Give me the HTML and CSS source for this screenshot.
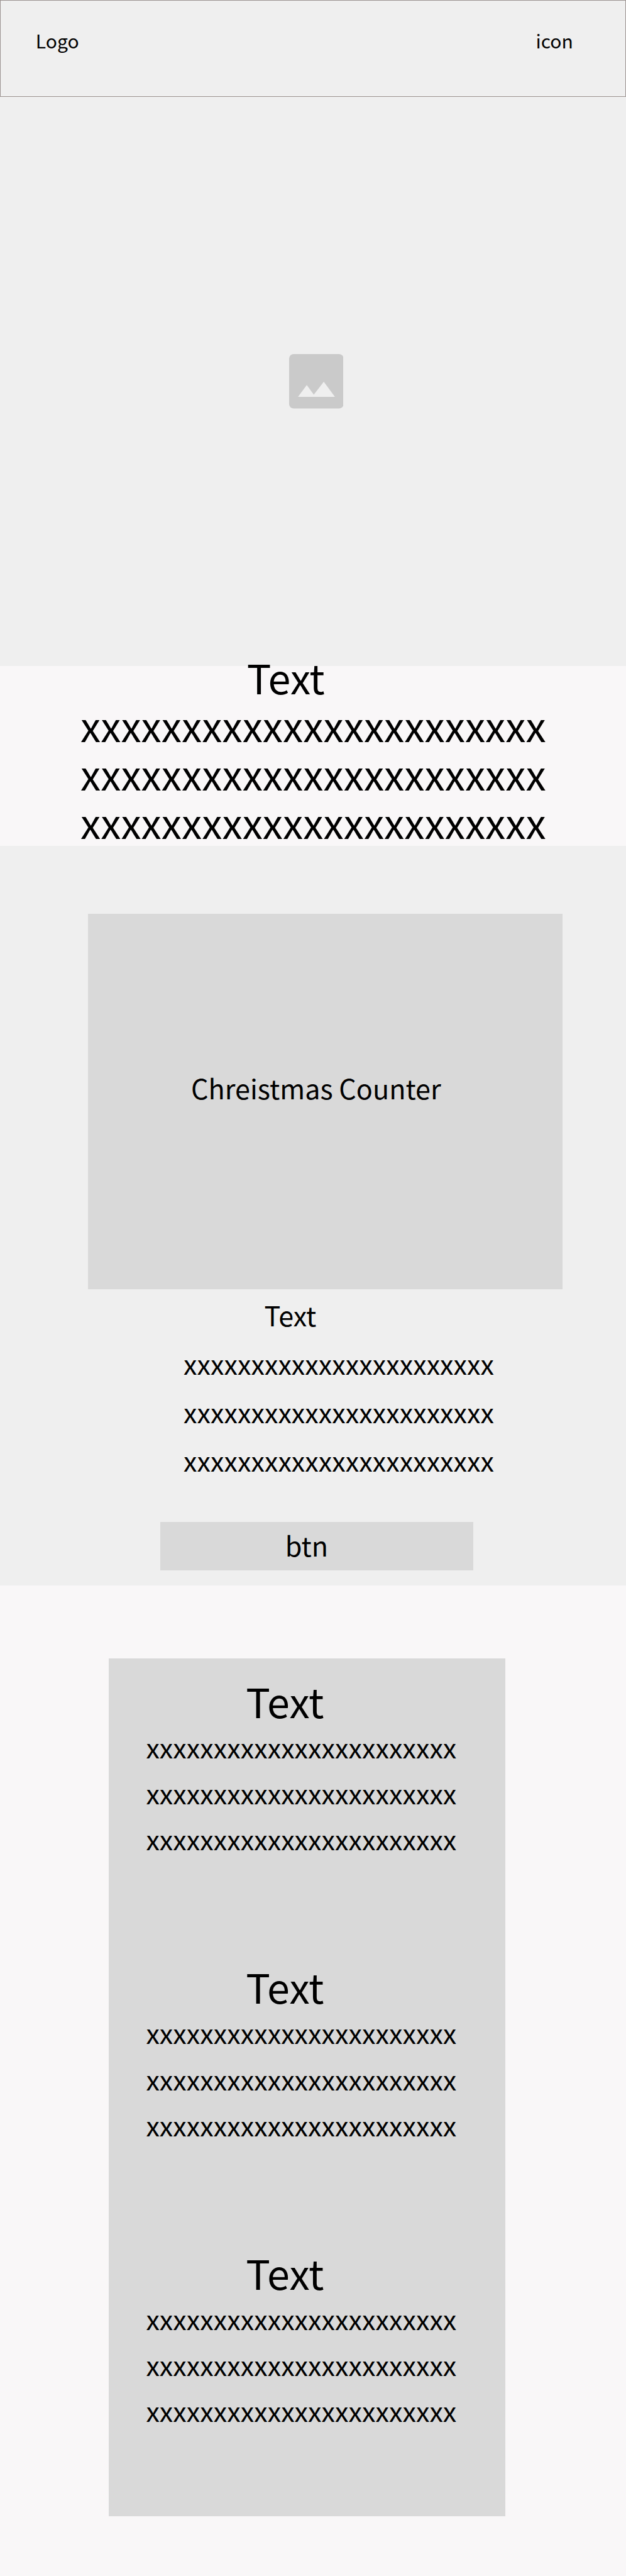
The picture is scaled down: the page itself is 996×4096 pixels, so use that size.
FILE: index.html
```html
<!DOCTYPE html>
<html lang="en">
<head>
<meta charset="utf-8">
<title>Christmas Counter</title>
<link rel="stylesheet" href="styles.css">
</head>
<body>
<header class="header">
  <span class="logo">Logo</span>
  <span class="menu">icon</span>
</header>
<main>
  <section class="hero">
    <svg class="placeholder" viewBox="0 0 144 144" aria-hidden="true">
      <rect width="144" height="144" rx="12" fill="#cacaca"/>
      <path d="M23.5 113L46.7 82L65.3 107.3L91.7 73.2L121.2 113Z" fill="#efefef"/>
    </svg>
  </section>
  <section class="intro">
    <h1 class="intro-title">Text</h1>
    <p class="intro-copy">xxxxxxxxxxxxxxxxxxxxxxx<br>xxxxxxxxxxxxxxxxxxxxxxx<br>xxxxxxxxxxxxxxxxxxxxxxx</p>
  </section>
  <section class="counter">
    <div class="counter-box">Chreistmas Counter</div>
    <h2 class="counter-title">Text</h2>
    <p class="counter-copy">xxxxxxxxxxxxxxxxxxxxxxx<br>xxxxxxxxxxxxxxxxxxxxxxx<br>xxxxxxxxxxxxxxxxxxxxxxx</p>
    <a class="btn">btn</a>
  </section>
  <section class="list">
    <div class="panel">
      <article class="item">
        <h2 class="item-title">Text</h2>
        <p class="item-copy">xxxxxxxxxxxxxxxxxxxxxxx<br>xxxxxxxxxxxxxxxxxxxxxxx<br>xxxxxxxxxxxxxxxxxxxxxxx</p>
      </article>
      <article class="item">
        <h2 class="item-title">Text</h2>
        <p class="item-copy">xxxxxxxxxxxxxxxxxxxxxxx<br>xxxxxxxxxxxxxxxxxxxxxxx<br>xxxxxxxxxxxxxxxxxxxxxxx</p>
      </article>
      <article class="item">
        <h2 class="item-title">Text</h2>
        <p class="item-copy">xxxxxxxxxxxxxxxxxxxxxxx<br>xxxxxxxxxxxxxxxxxxxxxxx<br>xxxxxxxxxxxxxxxxxxxxxxx</p>
      </article>
    </div>
  </section>
</main>
</body>
</html>
```
FILE: styles.css
```css
* { box-sizing: border-box; }
html { font-size: 9.6232px; }
body {
  margin: 0;
  background: #f9f7f8;
  color: #000;
  font-family: "Noto Sans CJK JP", "Noto Sans", sans-serif;
  font-size: 4.482rem;
  line-height: 8rem;
  white-space: nowrap;
}
h1, h2, p { margin: 0; font-weight: 400; }
h1, h2 { font-size: 6.722rem; }

.header {
  display: flex;
  justify-content: space-between;
  height: 16rem;
  padding: 4.55rem 8.64rem 0 5.8rem;
  border: 1px solid #9b9390;
  background: #efefef;
  font-size: 3.125rem;
  line-height: 4rem;
}

.hero {
  display: flex;
  align-items: center;
  justify-content: center;
  height: 94rem;
  padding-left: 1rem;
  background: #efefef;
}
.placeholder { display: block; width: 9rem; height: 9rem; }

.intro { height: 29.75rem; display: flex; flex-direction: column; }
.intro-title { margin-top: -2.13rem; padding-left: 40.8rem; }
.intro-copy { margin-top: -0.07rem; padding-left: 13.3rem; font-size: 6.722rem; }

.counter {
  height: 122.25rem;
  padding-top: 11.25rem;
  background: #efefef;
}
.counter-box {
  width: 78.5rem;
  height: 62rem;
  margin-left: 14.5rem;
  padding: 24.76rem 0 0 17.1rem;
  background: #d9d9d9;
}
.counter-title { padding: 0.26rem 0 0 43.7rem; font-size: 4.482rem; }
.counter-copy { padding-left: 30.35rem; }
.btn {
  display: block;
  width: 51.75rem;
  height: 8rem;
  margin: 6.24rem 0 0 26.5rem;
  padding-left: 20.65rem;
  background: #d9d9d9;
  line-height: 7.58rem;
}

.list { height: 163.75rem; padding: 12rem 0 0 18rem; }
.panel {
  width: 65.5rem;
  height: 141.75rem;
  padding-top: 3.66rem;
  background: #d9d9d9;
}
.item { height: 47.23rem; }
.item-title { padding-left: 22.65rem; line-height: 6.75rem; }
.item-copy { margin-top: 0.4rem; padding-left: 6.15rem; line-height: 7.625rem; }
```
